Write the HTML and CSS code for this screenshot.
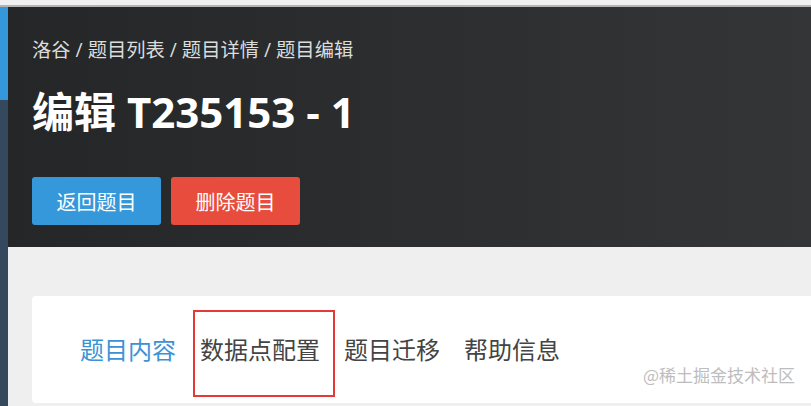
FILE: index.html
```html
<!DOCTYPE html>
<html lang="zh-CN">
  <head>
    <meta charset="UTF-8" />
    <meta name="viewport" content="width=device-width, initial-scale=1.0" />
    <title>编辑 T235153 - 1</title>
    <link rel="stylesheet" href="styles.css">
  </head>
  <body>
    <div class="topbar"></div>
    <div class="layout">
      <div class="side">
        <div class="side-top"></div>
      </div>
      <div class="main">
        <div class="hero">
          <div class="crumbs">洛谷 / 题目列表 / 题目详情 / 题目编辑</div>
          <h1 class="title">编辑 T235153 - 1</h1>
          <div class="actions">
            <button class="btn btn-blue">返回题目</button>
            <button class="btn btn-red">删除题目</button>
          </div>
        </div>
        <div class="content">
          <div class="card">
            <div class="tabs">
              <div class="tab active">题目内容</div>
              <div class="tab marked">数据点配置</div>
              <div class="tab">题目迁移</div>
              <div class="tab">帮助信息</div>
            </div>
          </div>
        </div>
      </div>
    </div>
    <div class="watermark">@稀土掘金技术社区</div>
  </body>
</html>
```

FILE: styles.css
```css
body {
  margin: 0;
  padding: 0;
  width: 811px;
  height: 406px;
  overflow: hidden;
  background: #efefef;
  font-family: "Open Sans", "Noto Sans CJK SC", sans-serif;
  position: relative;
}

.topbar {
  height: 5px;
  background: #f0f0f0;
  border-bottom: 2px solid #b4b4b4;
}

.layout {
  display: flex;
  height: 399px;
}

.side {
  width: 8px;
  flex-shrink: 0;
  background: #34495e;
}
.side-top {
  height: 93px;
  background: #3498db;
}

.main {
  flex: 1;
  display: flex;
  flex-direction: column;
}

.hero {
  height: 240px;
  box-sizing: border-box;
  padding: 29px 24px 0;
  background: linear-gradient(to right, #242627, #343536);
}
.crumbs {
  font-size: 19.3px;
  line-height: 28px;
  color: #dcdcdc;
}
.title {
  margin: 23px 0 0;
  font-size: 42px;
  line-height: 50px;
  font-weight: bold;
  color: #fff;
}
.actions {
  display: flex;
  gap: 10px;
  margin-top: 40px;
}
.btn {
  width: 129px;
  height: 48px;
  border: none;
  border-radius: 3px;
  color: #fff;
  font-family: "Open Sans", "Noto Sans CJK SC", sans-serif;
  font-size: 20px;
  padding: 0;
}
.btn-blue {
  background: #3498db;
}
.btn-red {
  background: #e74c3c;
}

.content {
  flex: 1;
  padding: 49px 0 0 24px;
}
.card {
  height: 107px;
  background: #fff;
  border-radius: 4px 0 0 4px;
  padding: 34px 36px 0;
  box-sizing: border-box;
}

.tabs {
  display: flex;
}
.tab {
  position: relative;
  padding: 0 12px;
  font-size: 24px;
  line-height: 40px;
  color: #444;
}
.tab.active {
  color: #3b93d6;
}
.tab.marked::after {
  content: '';
  position: absolute;
  left: 5px;
  top: -20px;
  width: 138px;
  height: 83px;
  border: 2px solid #e53935;
}

.watermark {
  position: absolute;
  right: 16px;
  bottom: 19px;
  font-size: 17px;
  color: #bdbdbd;
  font-family: "Noto Sans CJK SC", sans-serif;
}
```
